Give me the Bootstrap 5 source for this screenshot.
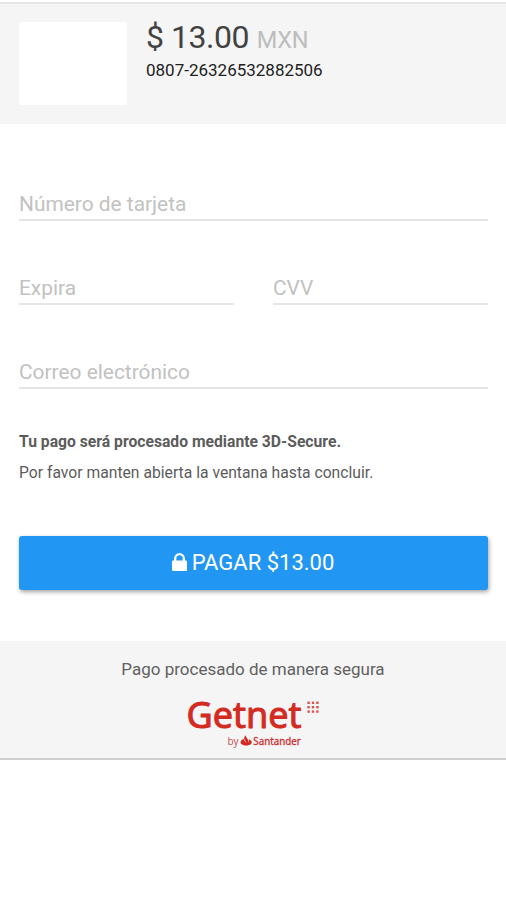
<!DOCTYPE html>
<html lang="es">
<head>
<meta charset="utf-8">
<meta name="viewport" content="width=device-width, initial-scale=1">
<title>Pago</title>
<link href="https://cdn.jsdelivr.net/npm/bootstrap@5.3.0/dist/css/bootstrap.min.css" rel="stylesheet">
<style>
body{font-family:Roboto,sans-serif;background:#fff;color:#5c5c5c}
.pay-sheet{margin-top:2px}
.pay-head{height:122px;background:#f5f5f5;border-top:2px solid #e6e6e6;padding:18px 19px 0}
.shop-logo{width:108px;height:83px;border-radius:2px;background:#fff;margin-right:19px}
.amount{font-size:32px;line-height:34px;color:#424242;letter-spacing:-.45px;margin-top:-2px}
.currency{font-size:23.5px;color:#bdbdbd;letter-spacing:-.2px}
.reference{font-size:17px;line-height:20px;color:#212121;margin-top:3px}
.pay-form{height:517px;padding:61px 18px 0 19px}
.field{height:36px;margin-bottom:48px;padding:3px 0 0;border:0;border-bottom:2px solid #e6e6e6;border-radius:0;font-size:20.9px;line-height:31px;background:transparent}
.field:focus{box-shadow:none;border-color:#2196f3}
.field::placeholder{color:#c2c2c2;opacity:1}
.field-pair{gap:39px}
.notice{font-size:15.7px;line-height:20px;row-gap:11px;margin-top:43px}
.pay-btn{height:54px;font-size:22px;line-height:54px;border-radius:3px;background:#2196f3;margin-top:53px;box-shadow:1px 2px 4px rgba(0,0,0,.36);gap:5px;padding-right:1px!important}
.pay-btn:hover{background:#1e88e5}
.lock-icon{margin-bottom:2px}
.pay-foot{height:119px;background:#f5f5f5;padding-top:18px;border-bottom:2px solid #cfcfcf;box-shadow:0 2px 3px rgba(0,0,0,.14)}
.secure{font-size:17px;line-height:20px;color:#616161}
.brand-name{font:400 37px "Noto Sans",sans-serif;fill:#d32a22;stroke:#d32a22;stroke-width:1;stroke-linejoin:round}
.brand-by{font:400 10.5px "Noto Sans",sans-serif;fill:#c4575a}
.brand-bank{font:400 10.5px "Noto Sans",sans-serif;fill:#cc3035;stroke:#cc3035;stroke-width:.3}
</style>
</head>
<body>
<main class="pay-sheet">
  <header class="pay-head d-flex align-items-start">
    <div class="shop-logo flex-shrink-0"></div>
    <div>
      <div class="amount text-nowrap">$ 13.00 <span class="currency">MXN</span></div>
      <div class="reference">0807-26326532882506</div>
    </div>
  </header>
  <form class="pay-form">
    <input class="field form-control" type="text" placeholder="Número de tarjeta" aria-label="Número de tarjeta">
    <div class="field-pair d-flex">
      <input class="field form-control" type="text" placeholder="Expira" aria-label="Expira">
      <input class="field form-control" type="text" placeholder="CVV" aria-label="CVV">
    </div>
    <input class="field form-control mb-0" type="email" placeholder="Correo electrónico" aria-label="Correo electrónico">
    <div class="notice d-grid">
      <strong>Tu pago será procesado mediante 3D-Secure.</strong>
      <span>Por favor manten abierta la ventana hasta concluir.</span>
    </div>
    <button class="pay-btn btn border-0 p-0 w-100 text-white d-flex justify-content-center align-items-center" type="button">
      <svg class="lock-icon" width="15" height="18" viewBox="0 0 15 18" aria-hidden="true"><path d="M3.2 9V5.5a4.3 4.3 0 0 1 8.6 0V9" fill="none" stroke="#fff" stroke-width="2.3"/><rect y="7.6" width="15" height="10.4" rx="1" fill="#fff"/></svg>
      <span>PAGAR $13.00</span>
    </button>
  </form>
  <footer class="pay-foot text-center">
    <div class="secure">Pago procesado de manera segura</div>
    <svg class="d-block mx-auto mt-3 overflow-visible" width="134" height="54" viewBox="0 0 134 54" role="img" aria-label="Getnet by Santander">
      <text class="brand-name" x="0.6" y="32.6" textLength="115" lengthAdjust="spacingAndGlyphs">Getnet</text>
      <g fill="#d9534f">
        <rect x="121.4" y="6.6" width="2.4" height="2.4"/><rect x="125.8" y="6.6" width="2.4" height="2.4"/><rect x="130.2" y="6.6" width="2.4" height="2.4"/>
        <rect x="121.4" y="11" width="2.4" height="2.4"/><rect x="125.8" y="11" width="2.4" height="2.4"/><rect x="130.2" y="11" width="2.4" height="2.4"/>
        <rect x="121.4" y="15.4" width="2.4" height="2.4"/><rect x="125.8" y="15.4" width="2.4" height="2.4"/><rect x="130.2" y="15.4" width="2.4" height="2.4"/>
      </g>
      <text class="brand-by" x="41.5" y="50" textLength="11" lengthAdjust="spacingAndGlyphs">by</text>
      <path d="M60 40.3c-.6 1.9 1.6 3.2 2.2 5.2.2.7.2 1.3 0 1.9.9-1 .9-2.2.5-3.2 1.900.7 3.1 1.8 3.1 3 0 1.9-2.500 3.300-5.600 3.300s-5.600-1.400-5.600-3.300c0-1.400 1.300-2.600 3.200-3.100 0 1.300 1.800 2.400 2.300 4 .3-2.500-2.400-3.200-1.900-5.400.2-1.100 1-1.900 1.800-2.400z" fill="#d32a22"/>
      <text class="brand-bank" x="67.3" y="50" textLength="47.5" lengthAdjust="spacingAndGlyphs">Santander</text>
    </svg>
  </footer>
</main>
<script src="https://cdn.jsdelivr.net/npm/bootstrap@5.3.0/dist/js/bootstrap.bundle.min.js"></script>
</body>
</html>
